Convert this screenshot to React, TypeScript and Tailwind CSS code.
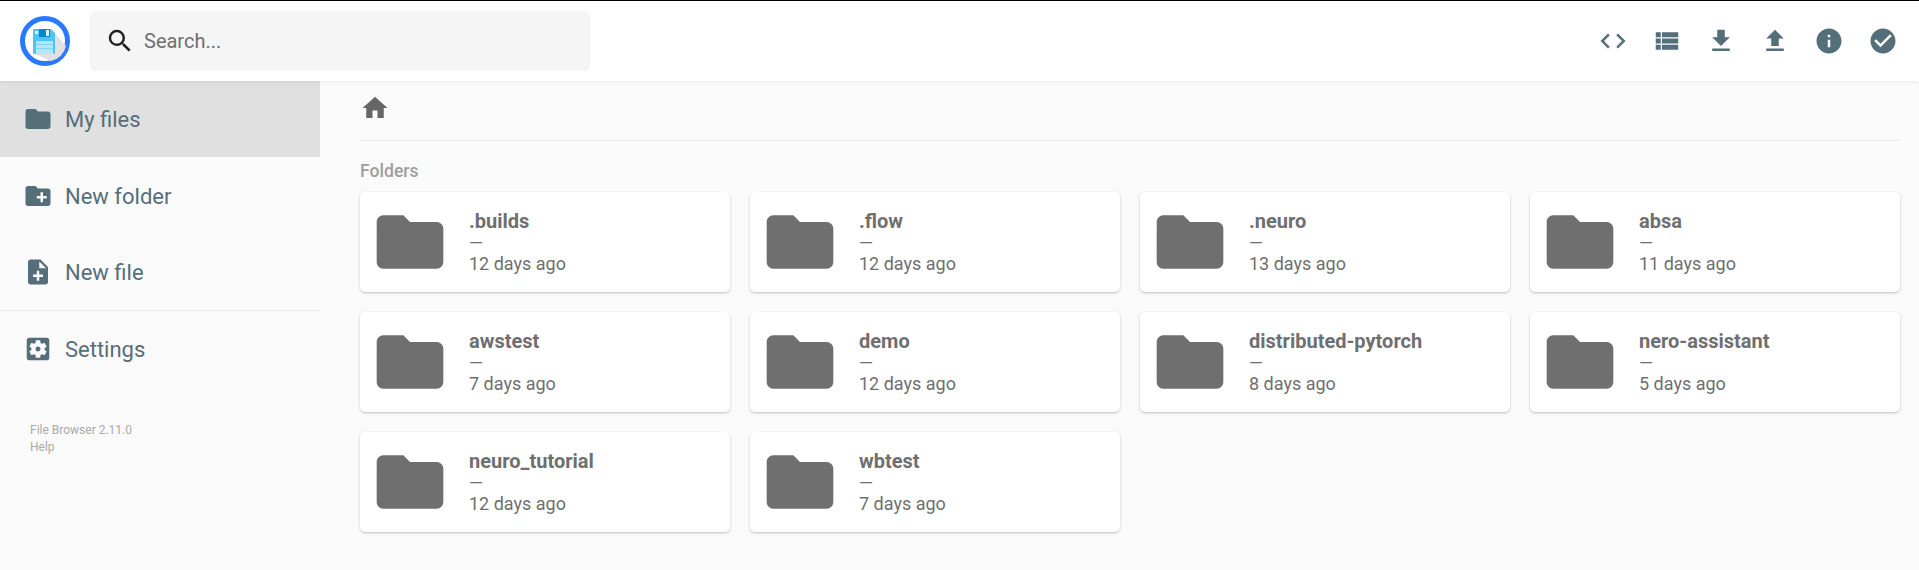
import { MdCode, MdViewList, MdFileDownload, MdFileUpload, MdInfo, MdCheckCircle, MdSearch, MdFolder, MdCreateNewFolder, MdNoteAdd, MdSettingsApplications, MdHome } from 'react-icons/md'

const folders = [
  { name: '.builds', time: '12 days ago' },
  { name: '.flow', time: '12 days ago' },
  { name: '.neuro', time: '13 days ago' },
  { name: 'absa', time: '11 days ago' },
  { name: 'awstest', time: '7 days ago' },
  { name: 'demo', time: '12 days ago' },
  { name: 'distributed-pytorch', time: '8 days ago' },
  { name: 'nero-assistant', time: '5 days ago' },
  { name: 'neuro_tutorial', time: '12 days ago' },
  { name: 'wbtest', time: '7 days ago' },
]

const topIcons = [MdCode, MdViewList, MdFileDownload, MdFileUpload, MdInfo, MdCheckCircle]

function Logo() {
  return (
    <svg width="50" height="50" viewBox="0 0 50 50" className="shrink-0">
      <circle cx="25" cy="25" r="22.500" fill="#fff" stroke="#2979ff" strokeWidth="5" />
      <path d="M31 13l15 17a20.500 20.500 0 0 1-15 15L15 38z" fill="#e0e0e0" />
      <path d="M14 13h17l4 4v20a1 1 0 0 1-1 1H14a1 1 0 0 1-1-1V14a1 1 0 0 1 1-1z" fill="#4fc3f7" />
      <rect x="19" y="13" width="11" height="8" fill="#0288d1" />
      <rect x="26" y="14" width="3" height="6" fill="#e1f5fe" />
      <rect x="15" y="15" width="3" height="3" fill="#e1f5fe" />
      <rect x="16" y="25" width="17" height="13" fill="#b3e5fc" />
      <rect x="16" y="28" width="17" height="1" fill="#81d4fa" />
      <rect x="16" y="32" width="17" height="1" fill="#81d4fa" />
    </svg>
  )
}

function SideItem({ icon: Icon, label, active }: { icon: typeof MdFolder; label: string; active?: boolean }) {
  return (
    <div className={`flex h-[76px] items-center pl-[23px] ${active ? 'bg-[#e0e0e0]' : ''}`}>
      <Icon size={30} className="text-[#546e7a]" />
      <span className="ml-3 text-[22px] text-[#546e7a]">{label}</span>
    </div>
  )
}

export default function App() {
  return (
    <div className="h-[570px] overflow-hidden bg-[#fafafa] font-['Roboto',sans-serif]">
      <div className="relative z-10 flex h-[81px] items-center border-t border-black bg-white pl-5 pr-[9px] shadow-[0_0_5px_rgba(0,0,0,0.1)]">
        <Logo />
        <div className="ml-5 flex h-[60px] w-[500px] items-center rounded-[5px] bg-[#f5f5f5] pl-[15px]">
          <MdSearch size={30} className="text-[#212121]" />
          <span className="ml-[9px] text-[20px] text-[#6f6f6f]">Search...</span>
        </div>
        <div className="ml-auto flex">
          {topIcons.map((Icon, i) => (
            <div key={i} className="flex w-[54px] justify-center">
              <Icon size={30} className="text-[#546e7a]" />
            </div>
          ))}
        </div>
      </div>

      <div className="flex">
        <aside className="w-[320px] shrink-0">
          <SideItem icon={MdFolder} label="My files" active />
          <div className="pt-px">
            <SideItem icon={MdCreateNewFolder} label="New folder" />
            <SideItem icon={MdNoteAdd} label="New file" />
          </div>
          <div className="border-t border-[#ececec]">
            <SideItem icon={MdSettingsApplications} label="Settings" />
          </div>
          <div className="mt-[35px] pl-[30px] text-[12px] leading-[17px] text-[#a9a9a9]">
            <p>File Browser 2.11.0</p>
            <p>Help</p>
          </div>
        </aside>

        <main className="flex-1 pl-10 pr-[19px]">
          <div className="flex h-[60px] items-start border-b border-[#ececec] pt-3">
            <MdHome size={30} className="text-[#666]" />
          </div>
          <p className="mt-[19px] text-[17.6px] font-medium leading-[22px] text-[#9e9e9e]">Folders</p>
          <div className="mt-[10px] grid grid-cols-4 gap-5">
            {folders.map(f => (
              <div key={f.name} className="flex h-[100px] items-center rounded-[5px] bg-white shadow-[0_1px_3px_rgba(0,0,0,0.12),0_1px_2px_rgba(0,0,0,0.12)]">
                <MdFolder size={80} className="ml-[10px] shrink-0 text-[#6f6f6f]" />
                <div className="ml-[19px] self-start pt-[17px] text-[#6f6f6f]">
                  <p className="text-[20px] font-bold leading-[24px]">{f.name}</p>
                  <p className="text-[18px] leading-[19px]">—</p>
                  <p className="text-[18px] leading-[24px]">{f.time}</p>
                </div>
              </div>
            ))}
          </div>
        </main>
      </div>
    </div>
  )
}
